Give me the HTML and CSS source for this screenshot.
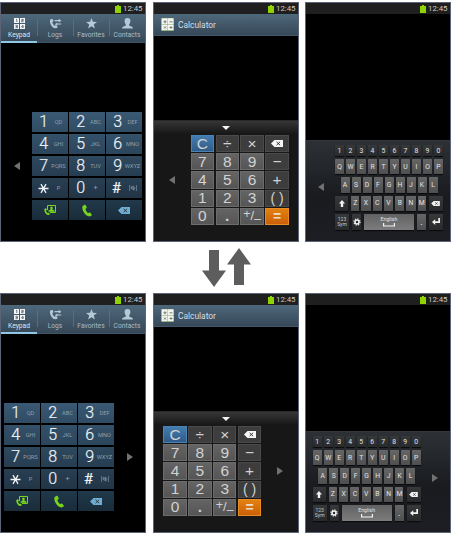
FILE: index.html
```html
<!DOCTYPE html>
<html lang="en">
<head>
<meta charset="utf-8">
<title>One-handed operation</title>
<link rel="stylesheet" href="styles.css">
</head>
<body>
<svg class="defs" width="0" height="0" aria-hidden="true">
  <symbol id="battery" viewBox="0 0 6 8"><path fill="#8fd400" d="M2 0h2v1h2v7H0V1h2z"/></symbol>
  <symbol id="grid" viewBox="0 0 11 11"><path fill="#f4f6f8" d="M0 0h5v5H0zM6 0h5v5H6zM0 6h5v5H0zM6 6h5v5H6z"/><path fill="none" stroke="#4a5a6a" stroke-width=".8" d="M2 1.3h.8v2.700M7.300 1.400h2v1.200h-1.600v1.200h1.800M1.400 7.300h2v2.500h-2M1.800 8.500h1.600M8.900 10V7.200L7.500 9h2.200"/></symbol>
  <symbol id="handset" viewBox="0 0 10 12"><path d="M.6 1.600 2.800.3Q3.500 0 3.800.7l.9 2.100q.2.600-.3.900l-1.100.8Q4 7 6 8.700l1.200-.6q.6-.3 1 .2l1.500 1.600q.5.500-.1 1L7.600 12Q3.900 11.700 1.600 7.500-.3 3.700.6 1.600z"/></symbol>
  <symbol id="logs" viewBox="0 0 13 12"><use href="#handset" width="9" height="11" y=".5"/><path d="M5.500 2.300h4.500V.9l3 2-3 2V3.500H5.500zM12.800 6H8.500V4.800L5.800 6.700l2.700 1.900V7.200h4.300z"/></symbol>
  <symbol id="star" viewBox="0 0 12 12"><path d="M6 0l1.600 4.200 4.400.2-3.500 2.800 1.200 4.300L6 9.100l-3.700 2.400 1.200-4.300L0 4.400l4.400-.2z"/></symbol>
  <symbol id="person" viewBox="0 0 12 12"><path d="M6 0c2.300 0 3.300 1.400 3.200 3.400-.1 1.600-.7 2.800-1.400 3.600v1.200c1.500.8 3.700 1 4.200 2.800v.5H0V11c.5-1.800 2.700-2 4.200-2.800V7C3.500 6.200 2.900 5 2.800 3.400 2.700 1.400 3.700 0 6 0z"/></symbol>
  <symbol id="erase" viewBox="0 0 12 7"><path d="M3.500 0H12v7H3.500L0 3.500z"/><path class="cut" fill="none" stroke-width="1" d="M5.500 1.800l3.600 3.400M9.100 1.800L5.500 5.200"/></symbol>
  <symbol id="video" viewBox="0 0 12 10"><path fill="none" stroke="#76d51c" stroke-width="1" d="M3.500 5V.5h8v7H6"/><path d="M7.500 1.500q1.500 0 1.300 1.600-.1 1-.5 1.300l2.200 1v1.300h-6V5.400l2.200-1q-.4-.4-.5-1.300-.2-1.600 1.300-1.600z"/><use href="#handset" x="0" y="3" width="6" height="7"/></symbol>
  <symbol id="left" viewBox="0 0 6 8"><path d="M6 0v8L0 4z"/></symbol>
  <symbol id="right" viewBox="0 0 6 8"><path d="M0 0v8l6-4z"/></symbol>
  <symbol id="calc" viewBox="0 0 13 13"><rect width="13" height="13" rx="1" fill="#7d9f62"/><path fill="#f3f5f0" d="M.7.3h5.900v6.200H.7zM7 .3h5.500v6.200H7zM.7 6.900h5.900v5.300H.7zM7 6.900h5.500v5.300H7z"/><path fill="none" stroke="#6a7262" stroke-width=".9" d="M2.500 3.800h3M4 2.300v3M8.500 3.800h3M3 8.500l2 2M5 8.500l-2 2M8.500 9.500h3M10 8v.8M10 10.200v.8"/></symbol>
  <symbol id="shift" viewBox="0 0 6 7"><path d="M3 0l3 3.500H4.200V7H1.800V3.500H0z"/></symbol>
  <symbol id="gear" viewBox="0 0 8 8"><circle cx="4" cy="4" r="2" fill="none" stroke="#f2f2f2" stroke-width="1.500"/><circle cx="4" cy="4" r="3.100" fill="none" stroke="#f2f2f2" stroke-width="1.100" stroke-dasharray="1.200 1.235"/></symbol>
  <symbol id="space" viewBox="0 0 12 4"><path fill="none" stroke="#f2f2f2" stroke-width="1.200" d="M.6 0v3h10.800V0"/></symbol>
  <symbol id="enter" viewBox="0 0 8 7"><path d="M6.300 0H8v5H3.200v2L0 4.100l3.200-2.800v2h3.100z"/></symbol>
  <symbol id="backslashed" viewBox="0 0 8 6"><path fill="none" stroke="#8094a5" stroke-width=".7" d="M1 .5H.4v5H1M7 .5h.6v5H7M2 3.700h1l1.500 1.300V1L3 2.300H2zM5.500 1.800q.8 1.200 0 2.400M1.700.8l4 4.600"/></symbol>
  <symbol id="asterisk" viewBox="0 0 11 11"><path fill="none" stroke="#eef3f6" stroke-width="1.300" d="M.5 5.500h10M3 1.200l5 8.600M8 1.200L3 9.800"/></symbol>
  <symbol id="down" viewBox="0 0 24 37"><path d="M7 0h10v20.500h7L12 37 0 20.500h7z"/></symbol>
  <symbol id="up" viewBox="0 0 24 37"><path d="M12 0l12 16.500h-7V37H7V16.500H0z"/></symbol>
</svg>

<main class="board">
  <section class="row">
    <article class="phone">
      <header class="status"><svg class="battery"><use href="#battery"/></svg><span>12:45</span></header>
      <nav class="tabs">
        <div class="tab active"><svg><use href="#grid"/></svg><span>Keypad</span></div>
        <div class="tab"><svg><use href="#logs"/></svg><span>Logs</span></div>
        <div class="tab"><svg><use href="#star"/></svg><span>Favorites</span></div>
        <div class="tab"><svg><use href="#person"/></svg><span>Contacts</span></div>
      </nav>
      <div class="dock dial-dock">
        <div class="side"><svg><use href="#left"/></svg></div>
        <div class="dial">
          <div><b>1</b><i>QD</i></div><div><b>2</b><i>ABC</i></div><div><b>3</b><i>DEF</i></div>
          <div><b>4</b><i>GHI</i></div><div><b>5</b><i>JKL</i></div><div><b>6</b><i>MNO</i></div>
          <div><b>7</b><i>PQRS</i></div><div><b>8</b><i>TUV</i></div><div><b>9</b><i>WXYZ</i></div>
          <div><svg class="ast"><use href="#asterisk"/></svg><i>P</i></div><div><b>0</b><i class="plus">+</i></div><div><b class="hash">#</b><i><svg class="mute"><use href="#backslashed"/></svg></i></div>
          <div class="act"><svg class="video"><use href="#video"/></svg></div><div class="act"><svg class="call"><use href="#handset"/></svg></div><div class="act"><svg class="erase"><use href="#erase"/></svg></div>
        </div>
      </div>
    </article>

    <article class="phone">
      <header class="status"><svg class="battery"><use href="#battery"/></svg><span>12:45</span></header>
      <div class="title"><svg><use href="#calc"/></svg><span>Calculator</span></div>
      <div class="calc-panel">
        <div class="handle"></div>
        <div class="dock">
          <div class="side"><svg><use href="#left"/></svg></div>
          <div class="calc">
            <div class="clear">C</div><div class="op">÷</div><div class="op">×</div><div class="op"><svg class="erase"><use href="#erase"/></svg></div>
            <div>7</div><div>8</div><div>9</div><div class="op">−</div>
            <div>4</div><div>5</div><div>6</div><div class="op">+</div>
            <div>1</div><div>2</div><div>3</div><div class="op paren">( )</div>
            <div>0</div><div class="dot">.</div><div class="sign"><sup>+</sup>/<sub>–</sub></div><div class="equals">=</div>
          </div>
        </div>
      </div>
    </article>

    <article class="phone">
      <header class="status"><svg class="battery"><use href="#battery"/></svg><span>12:45</span></header>
      <div class="kb-panel dock">
        <div class="side"><svg><use href="#left"/></svg></div>
        <div class="kb">
          <div class="keys nums"><span>1</span><span>2</span><span>3</span><span>4</span><span>5</span><span>6</span><span>7</span><span>8</span><span>9</span><span>0</span></div>
          <div class="keys"><span>Q</span><span>W</span><span>E</span><span>R</span><span>T</span><span>Y</span><span>U</span><span>I</span><span>O</span><span>P</span></div>
          <div class="keys home"><span>A</span><span>S</span><span>D</span><span>F</span><span>G</span><span>H</span><span>J</span><span>K</span><span>L</span></div>
          <div class="keys lower"><span class="fn"><svg class="shift"><use href="#shift"/></svg></span><span>Z</span><span>X</span><span>C</span><span>V</span><span>B</span><span>N</span><span>M</span><span class="fn"><svg class="bksp"><use href="#erase"/></svg></span></div>
          <div class="keys bottom"><span class="fn sym">123<br>Sym</span><span class="fn gear"><svg><use href="#gear"/></svg></span><span class="space">English<svg><use href="#space"/></svg></span><span class="period">.</span><span class="fn"><svg class="enter"><use href="#enter"/></svg></span></div>
        </div>
      </div>
    </article>
  </section>

  <div class="swap"><svg><use href="#down"/></svg><svg class="up"><use href="#up"/></svg></div>

  <section class="row">
    <article class="phone">
      <header class="status"><svg class="battery"><use href="#battery"/></svg><span>12:45</span></header>
      <nav class="tabs">
        <div class="tab active"><svg><use href="#grid"/></svg><span>Keypad</span></div>
        <div class="tab"><svg><use href="#logs"/></svg><span>Logs</span></div>
        <div class="tab"><svg><use href="#star"/></svg><span>Favorites</span></div>
        <div class="tab"><svg><use href="#person"/></svg><span>Contacts</span></div>
      </nav>
      <div class="dock dial-dock flip">
        <div class="side"><svg><use href="#right"/></svg></div>
        <div class="dial">
          <div><b>1</b><i>QD</i></div><div><b>2</b><i>ABC</i></div><div><b>3</b><i>DEF</i></div>
          <div><b>4</b><i>GHI</i></div><div><b>5</b><i>JKL</i></div><div><b>6</b><i>MNO</i></div>
          <div><b>7</b><i>PQRS</i></div><div><b>8</b><i>TUV</i></div><div><b>9</b><i>WXYZ</i></div>
          <div><svg class="ast"><use href="#asterisk"/></svg><i>P</i></div><div><b>0</b><i class="plus">+</i></div><div><b class="hash">#</b><i><svg class="mute"><use href="#backslashed"/></svg></i></div>
          <div class="act"><svg class="video"><use href="#video"/></svg></div><div class="act"><svg class="call"><use href="#handset"/></svg></div><div class="act"><svg class="erase"><use href="#erase"/></svg></div>
        </div>
      </div>
    </article>

    <article class="phone">
      <header class="status"><svg class="battery"><use href="#battery"/></svg><span>12:45</span></header>
      <div class="title"><svg><use href="#calc"/></svg><span>Calculator</span></div>
      <div class="calc-panel">
        <div class="handle"></div>
        <div class="dock flip">
          <div class="side"><svg><use href="#right"/></svg></div>
          <div class="calc">
            <div class="clear">C</div><div class="op">÷</div><div class="op">×</div><div class="op"><svg class="erase"><use href="#erase"/></svg></div>
            <div>7</div><div>8</div><div>9</div><div class="op">−</div>
            <div>4</div><div>5</div><div>6</div><div class="op">+</div>
            <div>1</div><div>2</div><div>3</div><div class="op paren">( )</div>
            <div>0</div><div class="dot">.</div><div class="sign"><sup>+</sup>/<sub>–</sub></div><div class="equals">=</div>
          </div>
        </div>
      </div>
    </article>

    <article class="phone">
      <header class="status"><svg class="battery"><use href="#battery"/></svg><span>12:45</span></header>
      <div class="kb-panel dock flip">
        <div class="side"><svg><use href="#right"/></svg></div>
        <div class="kb">
          <div class="keys nums"><span>1</span><span>2</span><span>3</span><span>4</span><span>5</span><span>6</span><span>7</span><span>8</span><span>9</span><span>0</span></div>
          <div class="keys"><span>Q</span><span>W</span><span>E</span><span>R</span><span>T</span><span>Y</span><span>U</span><span>I</span><span>O</span><span>P</span></div>
          <div class="keys home"><span>A</span><span>S</span><span>D</span><span>F</span><span>G</span><span>H</span><span>J</span><span>K</span><span>L</span></div>
          <div class="keys lower"><span class="fn"><svg class="shift"><use href="#shift"/></svg></span><span>Z</span><span>X</span><span>C</span><span>V</span><span>B</span><span>N</span><span>M</span><span class="fn"><svg class="bksp"><use href="#erase"/></svg></span></div>
          <div class="keys bottom"><span class="fn sym">123<br>Sym</span><span class="fn gear"><svg><use href="#gear"/></svg></span><span class="space">English<svg><use href="#space"/></svg></span><span class="period">.</span><span class="fn"><svg class="enter"><use href="#enter"/></svg></span></div>
        </div>
      </div>
    </article>
  </section>
</main>
</body>
</html>
```
FILE: styles.css
```css
* { box-sizing: border-box; }
body { margin: 0; background: #fff; font-family: Roboto, "Liberation Sans", sans-serif; }
svg { display: block; flex: none; }
.defs { height: 0; }
.board { width: 451px; height: 535px; padding-top: 2px; overflow: hidden; }
.row { display: grid; grid-template-columns: 153px 152px 146px; height: 240px; }
.phone { width: 146px; height: 240px; border: 1px solid #5c6478; background: #000; display: flex; flex-direction: column; overflow: hidden; }

.status { height: 11px; flex: none; background: #1f1f1f; display: flex; align-items: center; justify-content: flex-end; gap: 2px; padding-right: 2px; color: #ccc; font-size: 7.800px; line-height: 11px; }
.status span { width: 20px; }
.battery { width: 6px; height: 8px; }

.tabs { height: 29px; flex: none; display: grid; grid-template-columns: repeat(4, 1fr); background: linear-gradient(#4e687b, #364858); border-bottom: 1px solid #3f5669; }
.tab { display: flex; flex-direction: column; align-items: center; padding-top: 4px; font-size: 6.700px; line-height: 8px; color: #a9bac8; fill: #b4c8d5; background: linear-gradient(#566e80, #566e80) left 5px / 1px 17px no-repeat; }
.tab svg { width: 13px; height: 11px; margin-bottom: 1.500px; }
.tab.active { color: #dbe5ec; height: 29px; background: none; border-bottom: 2px solid #8fc6e4; }

.dock { display: flex; align-items: center; }
.dock.flip { flex-direction: row-reverse; justify-content: flex-end; }
.side { display: flex; justify-content: center; fill: #717171; }
.side svg { width: 6px; height: 8px; }

.dial-dock { margin-top: 69px; }
.dial-dock .side { width: 31px; }
.dial-dock.flip { padding-left: 3px; }
.dial { width: 110px; height: 108px; display: grid; grid-template-columns: repeat(3, 1fr); grid-template-rows: repeat(5, 20px); gap: 2px 1px; }
.dial > div { display: grid; grid-template-columns: 17px 1fr; align-items: center; background: linear-gradient(#3a5974, #304c63); }
.dial > div:nth-child(n+4) { background: linear-gradient(#34516a, #2b455b); }
.dial > div:nth-child(n+7) { background: linear-gradient(#2e485e, #263d51); }
.dial > div:nth-child(n+10) { background: linear-gradient(#283f52, #213546); }
.dial > div:nth-child(n+13) { background: linear-gradient(#21394b, #192c3a); }
.dial b { font-weight: 300; font-size: 16px; line-height: 20px; color: #eef3f6; text-align: right; padding-right: 1px; -webkit-text-stroke: .2px #eef3f6; }
.dial i { font-style: normal; font-size: 5.700px; line-height: 8px; color: #8b9fae; text-align: center; }
.dial .plus { font-size: 8px; }
.dial .ast { width: 11px; height: 11px; margin-left: 5.500px; }
.dial .hash { font-size: 15px; font-weight: 400; padding-right: 2px; }
.mute { width: 8px; height: 6px; margin: auto; }
.dial .act { display: flex; justify-content: center; fill: #76d51c; }
.video { width: 12px; height: 10px; }
.call { width: 10px; height: 13px; }
.dial .erase { width: 12px; height: 7px; fill: #6eacd2; }

.title { height: 22px; flex: none; background: linear-gradient(#4e687b, #364858); border-bottom: 1px solid #40576a; display: flex; align-items: center; gap: 4px; padding-left: 7px; color: #d6dee4; font-size: 8.400px; }
.title svg { width: 13px; height: 13px; }
.calc-panel { margin-top: 84px; flex: 1; background: #171717; }
.handle { height: 15px; background: linear-gradient(#363636, #171717 13px); border-top: 1px solid #292929; display: flex; justify-content: center; padding-top: 5px; }
.handle::before { content: ""; width: 8px; height: 4px; background: #f4f4f4; clip-path: polygon(0 0, 100% 0, 50% 100%); }
.calc-panel .side { width: 36.700px; }
.calc-panel .flip { padding-left: 9.300px; }
.calc { width: 98px; height: 90px; display: grid; grid-template-columns: repeat(4, 1fr); grid-template-rows: repeat(5, 1fr); gap: 1px 1.500px; }
.calc > div { background: linear-gradient(#646464, #555); border: .5px solid #6c6c6c; display: flex; align-items: center; justify-content: center; color: #d2d2d2; font: 15.500px/16px "Liberation Sans", sans-serif; overflow: hidden; }
.calc .op { background: #3d3d3d; border-color: #4a4a4a; }
.calc .clear { background: linear-gradient(#437cb0, #315b87); border-color: #4b83b4; }
.calc .equals { background: linear-gradient(#e28110, #cb5f08); border-color: #e58c26; font-size: 14px; font-weight: 700; color: #f0dcc4; }
.calc .paren { font-size: 14px; }
.calc .dot { font-weight: 700; }
.calc .sign { font-size: 13px; }
.calc sup, .calc sub { font-size: 12.500px; line-height: 1; }
.calc sup { margin-top: -5px; }
.calc sub { margin-top: 5px; }
.calc .erase { width: 12px; height: 7px; fill: #f7f7f7; }
.cut { stroke: #33383d; }

.kb-panel { margin-top: auto; height: 101px; flex: none; align-items: flex-start; padding-top: 4px; background: linear-gradient(#2d3135, #191b1f 55%, #1c1e23); border-top: 1px solid #33373b; }
.kb-panel .side { width: 29px; height: 84px; align-items: center; }
.kb-panel.flip { padding-left: 6.700px; }
.kb { width: 108px; display: flex; flex-direction: column; gap: 3px; }
.keys { display: grid; grid-template-columns: repeat(10, 1fr); column-gap: 2px; height: 15.400px; }
.keys span { background: linear-gradient(#666, #4f4f4f); border-radius: .5px; box-shadow: 0 1px 1px #08090a; color: #e4e4e4; font-size: 6.800px; line-height: 8px; display: flex; align-items: center; justify-content: center; fill: #f2f2f2; }
.keys.nums { height: 11px; }
.keys.nums span, .keys .fn { background: linear-gradient(#36383a, #292a2c); }
.keys.home { grid-template-columns: repeat(9, 1fr); margin: 0 5.500px; }
.keys.lower { grid-template-columns: 13px repeat(7, 1fr) 14px; column-gap: 2.200px; }
.keys.lower span:nth-child(2) { margin-left: 1px; }
.keys.lower span:nth-child(8) { margin-right: 1px; }
.keys.bottom { grid-template-columns: 14px 9px 50px 9px 14px; column-gap: 3px; }
.shift { width: 6px; height: 7px; }
.bksp { width: 9px; height: 5px; }
.enter { width: 8px; height: 7px; }
.gear svg { width: 8px; height: 8px; }
.keys .sym { display: block; font-size: 5px; line-height: 5px; text-align: center; padding-top: 2.500px; color: #c6c6c6; }
.keys .space { flex-direction: column; font-size: 5.200px; line-height: 7px; background: linear-gradient(#626262, #7c7c7c); }
.space svg { width: 12px; height: 4px; }
.keys .period { padding-top: 2px; font-weight: 700; }

.swap { height: 51px; padding: 8px 0 0 201.500px; display: flex; gap: 1px; fill: #5d5d5d; }
.swap svg { width: 24px; height: 37px; }
.swap .up { margin-top: -2px; }
```
